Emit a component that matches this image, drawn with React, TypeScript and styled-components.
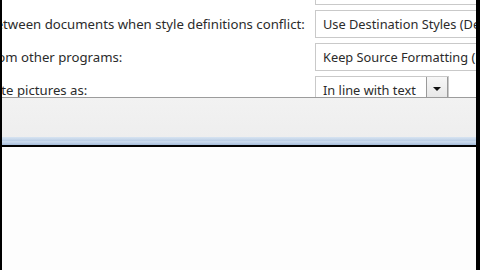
import styled, { createGlobalStyle } from 'styled-components';

const GlobalStyle = createGlobalStyle`
  html, body {
    margin: 0;
    padding: 0;
    background: #000;
  }
  body {
    width: 480px;
    height: 270px;
    overflow: hidden;
  }
`;

const Screen = styled.div`
  display: flex;
  flex-direction: column;
  width: 480px;
  height: 270px;
  padding: 0 4px 0 2px;
  box-sizing: border-box;
  background: #000;
  overflow: hidden;
  font-family: 'Noto Sans', 'Open Sans', sans-serif;
  font-size: 13.2px;
  color: #2b2b2b;
`;

const Options = styled.div`
  height: 97px;
  flex-shrink: 0;
  background: #fff;
  overflow: hidden;
`;

const OptionList = styled.div`
  display: flex;
  flex-direction: column;
  gap: 5px;
  margin: -23px -40px 0 -64px;
`;

const OptionRow = styled.div`
  display: grid;
  grid-template-columns: 377px 1fr;
  align-items: center;
  height: 28px;
`;

const Label = styled.span`
  white-space: nowrap;
`;

const Select = styled.div<{ $width?: number }>`
  display: flex;
  align-items: center;
  justify-content: space-between;
  align-self: stretch;
  width: ${(p) => (p.$width ? `${p.$width}px` : 'auto')};
  padding-left: 7px;
  box-sizing: border-box;
  border: 1px solid #c9c9c9;
  background: #fff;
  font-size: 12.8px;
  white-space: nowrap;
  overflow: hidden;
`;

const DropButton = styled.div`
  display: flex;
  align-items: center;
  justify-content: center;
  align-self: flex-start;
  width: 22px;
  height: 24px;
  border: 1px solid #9a9a9a;
  border-top: none;
  box-sizing: border-box;
  background: linear-gradient(#f7f7f7, #e6e6e6);
`;

const Arrow = styled.span`
  width: 0;
  height: 0;
  border-left: 4px solid transparent;
  border-right: 4px solid transparent;
  border-top: 4px solid #111;
`;

const ButtonBar = styled.div`
  height: 40px;
  flex-shrink: 0;
  box-sizing: border-box;
  border-top: 1px solid #9c9c9c;
  background: linear-gradient(#f2f2f2, #eeeeee);
`;

const TitleEdge = styled.div`
  height: 8px;
  flex-shrink: 0;
  background: linear-gradient(#d8e4f1, #bccfe6 45%, #cddcee 60%, #a4bcdb);
`;

const Document = styled.div`
  flex: 1;
  margin-top: 2px;
  background: #fdfdfd;
`;

const options = [
  { label: 'Pasting between documents:', value: 'Keep Source Formatting (Default)' },
  {
    label: 'Pasting between documents when style definitions conflict:',
    value: 'Use Destination Styles (Default)',
  },
  { label: 'Pasting from other programs:', value: 'Keep Source Formatting (Default)' },
];

const App = () => {
  return (
    <>
      <GlobalStyle />
      <Screen>
        <Options>
          <OptionList>
            {options.map((o, i) => (
              <OptionRow key={i}>
                <Label>{o.label}</Label>
                <Select>{o.value}</Select>
              </OptionRow>
            ))}
            <OptionRow>
              <Label>Insert/paste pictures as:</Label>
              <Select $width={134}>
                In line with text
                <DropButton>
                  <Arrow />
                </DropButton>
              </Select>
            </OptionRow>
          </OptionList>
        </Options>
        <ButtonBar />
        <TitleEdge />
        <Document />
      </Screen>
    </>
  );
};

export default App;
